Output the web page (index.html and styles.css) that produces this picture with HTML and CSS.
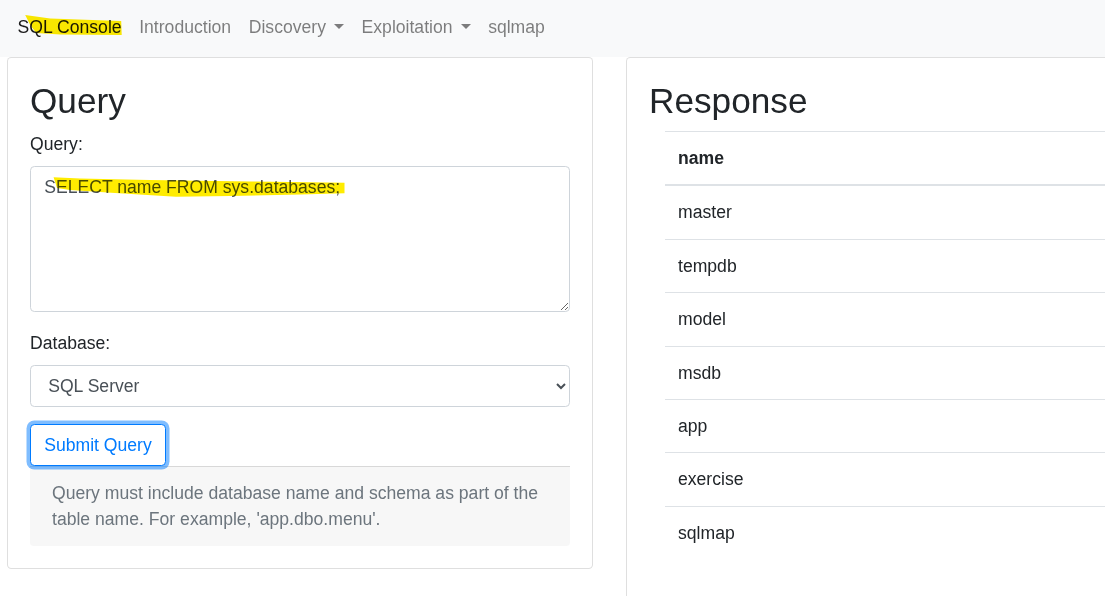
FILE: index.html
```html
<!DOCTYPE html>
<html lang="en">
<head>
<meta charset="utf-8">
<title>SQL Console</title>
<link rel="stylesheet" href="styles.css">
</head>
<body>
<nav class="navbar">
  <a class="nav-link brand" href="#">
    <svg class="marker" viewBox="0 0 120 27" width="120" height="27" aria-hidden="true">
      <polygon points="16.2,1 41.2,4.5 112.2,7 112.7,21 51.2,20.5 27.2,19 21.2,11" />
    </svg>
    <span class="link-text">SQL Console</span>
  </a>
  <a class="nav-link" href="#">Introduction</a>
  <a class="nav-link dropdown-toggle" href="#">Discovery</a>
  <a class="nav-link dropdown-toggle" href="#">Exploitation</a>
  <a class="nav-link" href="#">sqlmap</a>
</nav>

<main class="layout">
  <section class="card card-query">
    <div class="card-body">
      <h2 class="card-title">Query</h2>
      <form class="query-form">
        <div class="form-group">
          <label for="query">Query:</label>
          <div class="textarea-wrap">
            <textarea id="query" class="form-control" rows="5">SELECT name FROM sys.databases;</textarea>
            <svg class="marker-overlay" viewBox="0 0 540 146" width="540" height="146" aria-hidden="true">
              <polygon points="23.6,11.3 50,12.5 120,14 220,15.5 314.5,16.7 314.5,27.3 270,28.5 200,30 146,30.7 85,27 40,24 27,22" />
            </svg>
          </div>
        </div>
        <div class="form-group">
          <label for="db">Database:</label>
          <select id="db" class="form-control">
            <option>SQL Server</option>
            <option>MySQL</option>
            <option>PostgreSQL</option>
          </select>
        </div>
        <button type="button" class="btn btn-outline">Submit Query</button>
      </form>
      <div class="note">Query must include database name and schema as part of the table name. For example, 'app.dbo.menu'.</div>
    </div>
  </section>

  <section class="card card-response">
    <div class="card-body">
      <h2 class="card-title">Response</h2>
      <table class="table">
        <thead>
          <tr><th>name</th></tr>
        </thead>
        <tbody>
          <tr><td>master</td></tr>
          <tr><td>tempdb</td></tr>
          <tr><td>model</td></tr>
          <tr><td>msdb</td></tr>
          <tr><td>app</td></tr>
          <tr><td>exercise</td></tr>
          <tr><td>sqlmap</td></tr>
        </tbody>
      </table>
    </div>
  </section>
</main>
</body>
</html>
```

FILE: styles.css
```css
html, body {
  margin: 0;
  padding: 0;
  overflow: hidden;
  height: 100%;
}

body {
  font-family: "Liberation Sans", Arial, sans-serif;
  font-size: 17.6px;
  line-height: 26.4px;
  color: #212529;
  background: #fff;
}

/* Navbar */
.navbar {
  display: flex;
  align-items: flex-start;
  box-sizing: border-box;
  height: 57px;
  padding: 14px 8.8px 0;
  background: #f8f9fa;
}

.nav-link {
  position: relative;
  display: block;
  padding: 0 8.8px;
  color: rgba(0, 0, 0, 0.5);
  text-decoration: none;
  white-space: nowrap;
}

.nav-link.brand {
  color: rgba(0, 0, 0, 0.9);
}

.marker {
  position: absolute;
  left: 0;
  top: 0;
  fill: #ffec00;
  mix-blend-mode: multiply;
  pointer-events: none;
}

.link-text {
  position: relative;
}

.dropdown-toggle::after {
  content: "";
  display: inline-block;
  margin-left: 8px;
  vertical-align: 4.5px;
  border-top: 5px solid;
  border-right: 5px solid transparent;
  border-left: 5px solid transparent;
  border-bottom: 0;
}

/* Layout */
.layout {
  display: flex;
  align-items: flex-start;
  gap: 33px;
  padding-left: 7px;
}

.card {
  flex: 0 0 auto;
  box-sizing: border-box;
  width: 586px;
  border: 1px solid rgba(0, 0, 0, 0.125);
  border-radius: 4.4px;
  background: #fff;
}

.card-response {
  min-height: 600px;
}

.card-body {
  padding: 22px;
}

.card-title {
  margin: 0 0 8.8px;
  font-size: 35.2px;
  font-weight: 500;
  line-height: 1.2;
}

/* Form */
.form-group {
  margin-bottom: 17.6px;
}

label {
  display: inline-block;
  margin-bottom: 8.8px;
}

.textarea-wrap {
  position: relative;
}

.marker-overlay {
  position: absolute;
  left: 0;
  top: 0;
  fill: #ffec00;
  mix-blend-mode: multiply;
  pointer-events: none;
}

.form-control {
  display: block;
  box-sizing: border-box;
  width: 100%;
  margin: 0;
  padding: 6.6px 13.2px;
  font-family: inherit;
  font-size: 17.6px;
  line-height: 26.4px;
  color: #495057;
  background: #fff;
  border: 1px solid #ced4da;
  border-radius: 4.4px;
}

textarea.form-control {
  height: 146px;
  resize: vertical;
  overflow: auto;
}

select.form-control {
  height: 41.6px;
}

.btn {
  display: inline-block;
  box-sizing: border-box;
  padding: 6.6px 13.2px;
  font-family: inherit;
  font-size: 17.6px;
  line-height: 26.4px;
  border-radius: 4.4px;
  cursor: pointer;
}

.btn-outline {
  color: #007bff;
  background: #fff;
  border: 1px solid #007bff;
  box-shadow: 0 0 0 3.5px rgba(0, 123, 255, 0.5);
}

.query-form {
  margin: 0;
}

.note {
  padding: 13.2px 22px;
  color: #6c757d;
  background: rgba(0, 0, 0, 0.03);
  border-top: 1px solid rgba(0, 0, 0, 0.125);
  border-radius: 0 0 3.4px 3.4px;
}

/* Table */
.table {
  width: calc(100% - 16px);
  margin-left: 16px;
  border-collapse: collapse;
  color: #212529;
}

.table th,
.table td {
  padding: 13px;
  text-align: left;
  vertical-align: top;
  border-top: 1px solid #dee2e6;
}

.table thead th {
  font-weight: 700;
  border-bottom: 2px solid #dee2e6;
}
```
